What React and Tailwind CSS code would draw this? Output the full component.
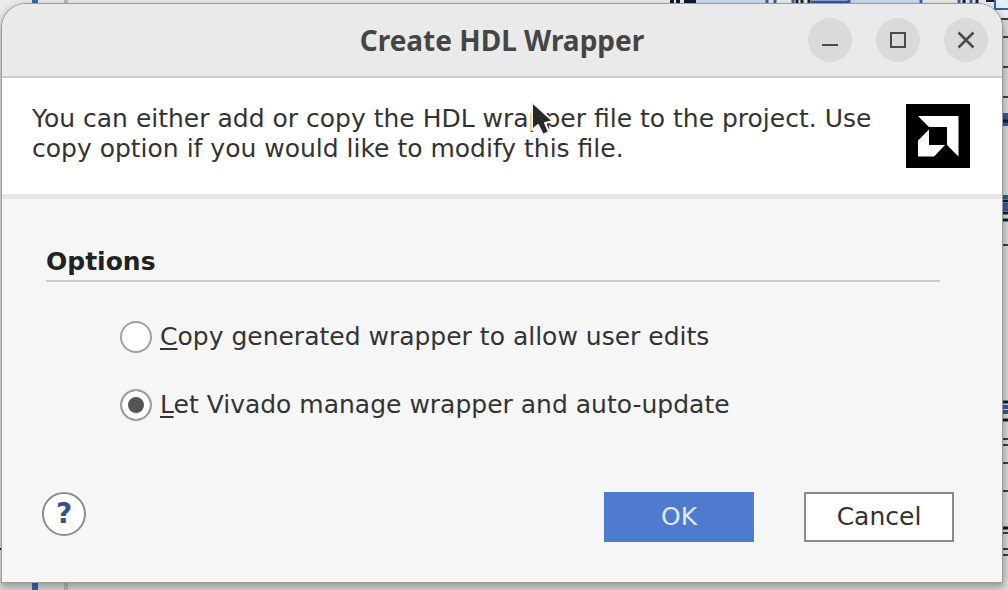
import { useState } from "react";

function Backdrop() {
  return (
    <svg className="absolute inset-0 h-full w-full" viewBox="0 0 1008 590" preserveAspectRatio="none" aria-hidden="true">
      <rect width="1008" height="590" fill="#ebebea" />
      <rect x="996" y="20" width="12" height="560" fill="#dcdbda" />
      <rect y="578" width="1008" height="12" fill="#e0e0df" />
      <path d="M35 0V590" stroke="#3a67b5" strokeWidth="6" />
      <path d="M66 0V590" stroke="#bcbcbc" strokeWidth="4" />
      <path d="M0 549H10" stroke="#222" strokeWidth="2" />
      <rect x="696" y="0" width="72" height="6" fill="#cbdcf0" />
      <rect x="850" y="0" width="72" height="6" fill="#cbdcf0" />
      <path d="M672 0V6M678 0V6M684 2H696" stroke="#0c1c30" strokeWidth="4" />
      <path d="M767 0V6M775 0V6M849 0V6M921 0V6M959 0V6M971 0V6M793 0V6" stroke="#3b5ea5" strokeWidth="3" />
      <path d="M797 0V6M802 0V6M809 0V6M964 0V6M977 0V6" stroke="#122238" strokeWidth="3" />
      <path d="M811 2H849" stroke="#34599f" strokeWidth="3" />
      <path d="M986 0H994V2H986Z" fill="#14233a" />
      <path d="M995 -2V9H1010V-2Z" fill="#e3effd" stroke="#3b5ea5" strokeWidth="2" />
      <path d="M1000 19H1008M1000 37H1008M1000 67H1008M1000 97H1008M1000 245H1008M1000 439H1008M1000 445H1008M1000 463H1008M1000 491H1008M1000 533H1008M1000 549H1008M1000 555H1008" stroke="#35424e" strokeWidth="2" />
      <path d="M1000 115H1008M1000 119H1008M1000 124H1008M1000 197H1008M1000 205H1008M1000 209H1008M1000 407H1008M1000 412H1008" stroke="#34599f" strokeWidth="4" />
      <path d="M1000 121H1008M1000 201H1008M1000 213H1008M1000 220H1008M1000 402H1008M1000 420H1008M1000 528H1008" stroke="#101e2b" strokeWidth="3" />
    </svg>
  );
}

function WindowButton({ label, children }) {
  return (
    <button type="button" aria-label={label} className="flex size-11 items-center justify-center rounded-full bg-[#dadada]">
      <svg className="size-6" viewBox="0 0 24 24" fill="none" stroke="#4a4a4a" strokeWidth="2" aria-hidden="true">
        {children}
      </svg>
    </button>
  );
}

function TitleBar() {
  return (
    <header className="grid h-[74px] grid-cols-[1fr_auto_1fr] items-center border-b-2 border-[#cccccc] bg-[#eaeaea] px-[14px]">
      <span />
      <h1 className="font-['Noto_Sans',sans-serif] text-[28px] leading-9 font-bold text-[#454545]">Create HDL Wrapper</h1>
      <div className="flex justify-end gap-6">
        <WindowButton label="Minimize">
          <path d="M4 17H20" />
        </WindowButton>
        <WindowButton label="Maximize">
          <rect x="5" y="5" width="14" height="14" />
        </WindowButton>
        <WindowButton label="Close">
          <path d="M4.500 4.500L19.500 19.500M19.500 4.500L4.500 19.500" strokeWidth="2.500" />
        </WindowButton>
      </div>
    </header>
  );
}

function BrandMark() {
  return (
    <svg className="size-16 shrink-0" viewBox="0 0 64 64" role="img" aria-label="AMD">
      <rect width="64" height="64" fill="#000" />
      <path d="M12 12H52.500V52.500L41 41V23H23Z" fill="#fff" />
      <path d="M23 25.500V41H39L28 52.500H12V36.500Z" fill="#fff" />
    </svg>
  );
}

function Pointer() {
  return (
    <svg className="absolute top-[98px] left-[528px] h-10 w-7" viewBox="0 0 28 40" aria-hidden="true">
      <path d="M4 4V32L10 27L15 37L21 34L17 25L25 23Z" fill="#282828" stroke="#f2f2f2" strokeWidth="2" strokeLinejoin="round" />
    </svg>
  );
}

function Option({ id, accessKey, rest, checked, onChange }) {
  return (
    <div className="flex items-center gap-2">
      <input
        id={id}
        type="radio"
        name="wrapper-mode"
        checked={checked}
        onChange={onChange}
        className="size-8 shrink-0 appearance-none rounded-full border-2 border-[#a0a0a0] bg-white checked:bg-[#555555] checked:shadow-[inset_0_0_0_6px_#ffffff]"
      />
      <label htmlFor={id} className="leading-[30px]">
        <span className="underline decoration-2 underline-offset-3">{accessKey}</span>
        {rest}
      </label>
    </div>
  );
}

export default function App() {
  const [mode, setMode] = useState("manage");
  return (
    <div className="relative flex min-h-screen pt-1 pr-[6px] pb-2 pl-0.5 font-['DejaVu_Sans',sans-serif] text-[25px] text-[#333333]">
      <Backdrop />
      <main className="relative flex flex-1 flex-col overflow-hidden rounded-t-3xl bg-[#f6f6f6] shadow-[0_0_0_1px_#9b9b9b,0_4px_8px_2px_#00000050]">
        <TitleBar />
        <section className="flex justify-between gap-5 border-b-[5px] border-[#e6e6e6] bg-white pt-[26px] pr-8 pb-[26px] pl-[30px]">
          <p className="leading-[30px]">
            You can either add or copy the HDL wrapper file to the project. Use copy option if you would like to modify this file.
          </p>
          <BrandMark />
        </section>
        <form className="flex flex-1 flex-col pt-[45px] pr-12 pb-10 pl-10" onSubmit={(e) => e.preventDefault()}>
          <fieldset className="pr-[14px] pl-1">
            <legend className="w-full border-b-2 border-[#cccccc] leading-9 font-bold text-[#222222]">Options</legend>
            <div className="flex flex-col gap-9 pt-[39px] pl-[74px]">
              <Option id="copy" accessKey="C" rest="opy generated wrapper to allow user edits" checked={mode === "copy"} onChange={() => setMode("copy")} />
              <Option id="manage" accessKey="L" rest="et Vivado manage wrapper and auto-update" checked={mode === "manage"} onChange={() => setMode("manage")} />
            </div>
          </fieldset>
          <div className="mt-auto flex items-start justify-between">
            <button type="button" aria-label="Help" className="size-11 rounded-full border-2 border-[#8c8c8c] bg-white text-[28px] leading-10 font-bold text-[#35528f]">
              ?
            </button>
            <div className="flex gap-[50px]">
              <button type="submit" className="h-[50px] w-[150px] bg-[#4e7bd0] text-[#e3e8f2]">
                OK
              </button>
              <button type="button" className="h-[50px] w-[150px] border-2 border-[#8a8a8a] bg-white">
                Cancel
              </button>
            </div>
          </div>
        </form>
      </main>
      <Pointer />
    </div>
  );
}
